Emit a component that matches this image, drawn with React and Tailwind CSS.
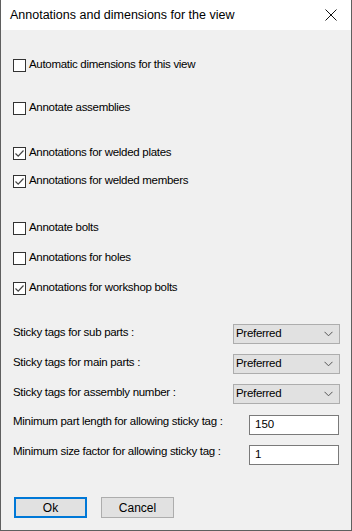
import React, { useState } from 'react';

const font = { fontFamily: '"Segoe UI", "Liberation Sans", Arial, sans-serif' };

function CheckRow({ label, checked, onToggle, className }) {
  return (
    <div className={`flex h-4 items-center pl-3 ${className}`} onClick={onToggle}>
      <div className="flex h-[13px] w-[13px] shrink-0 items-center justify-center border border-[#333333] bg-white">
        {checked && (
          <svg width="11" height="11" viewBox="0 0 11 11">
            <path d="M1.5 5.5 L4.2 8.2 L9.5 2.5" fill="none" stroke="#444444" strokeWidth="1.2" />
          </svg>
        )}
      </div>
      <span className="ml-[3px] text-[11.5px] tracking-[-0.3px] text-black">{label}</span>
    </div>
  );
}

function ComboRow({ label, value, className }) {
  return (
    <div className={`flex h-5 items-center justify-between pl-3 pr-[11px] ${className}`}>
      <span className="-mt-[3px] text-[11.5px] tracking-[-0.3px] text-black">{label}</span>
      <div className="flex h-5 w-[107px] items-center justify-between border border-[#adadad] bg-[#e1e1e1] pl-[2px] pr-[6px]">
        <span className="text-[11.5px] tracking-[-0.3px] text-black">{value}</span>
        <svg width="9" height="6" viewBox="0 0 9 6">
          <path d="M0.5 0.8 L4.5 4.8 L8.5 0.8" fill="none" stroke="#555555" strokeWidth="1" />
        </svg>
      </div>
    </div>
  );
}

function InputRow({ label, value, className }) {
  return (
    <div className={`flex h-5 items-center justify-between pl-3 pr-3 ${className}`}>
      <span className="-mt-[6px] text-[11.5px] tracking-[-0.3px] text-black">{label}</span>
      <div className="flex h-5 w-[90px] items-center border border-[#7a7a7a] bg-white pl-[5px]">
        <span className="text-[11.5px] text-black">{value}</span>
      </div>
    </div>
  );
}

export default function App() {
  const [checks, setChecks] = useState({
    auto: false,
    assemblies: false,
    plates: true,
    members: true,
    bolts: false,
    holes: false,
    workshop: true,
  });

  const toggle = (key) => setChecks({ ...checks, [key]: !checks[key] });

  return (
    <div className="flex h-[531px] w-[352px] flex-col border-x border-b border-[#5f5f5f] bg-[#f0f0f0]" style={font}>
      <div className="flex h-[30px] shrink-0 items-center justify-between bg-white pl-[9px] pr-[14px]">
        <span className="text-[12.5px] text-black">Annotations and dimensions for the view</span>
        <svg width="12" height="12" viewBox="0 0 12 12">
          <path d="M0.5 0.5 L11.5 11.5 M11.5 0.5 L0.5 11.5" stroke="#111111" strokeWidth="1" />
        </svg>
      </div>

      <CheckRow className="mt-[27px]" label="Automatic dimensions for this view" checked={checks.auto} onToggle={() => toggle('auto')} />
      <CheckRow className="mt-[27px]" label="Annotate assemblies" checked={checks.assemblies} onToggle={() => toggle('assemblies')} />
      <CheckRow className="mt-[29px]" label="Annotations for welded plates" checked={checks.plates} onToggle={() => toggle('plates')} />
      <CheckRow className="mt-[12px]" label="Annotations for welded members" checked={checks.members} onToggle={() => toggle('members')} />
      <CheckRow className="mt-[31px]" label="Annotate bolts" checked={checks.bolts} onToggle={() => toggle('bolts')} />
      <CheckRow className="mt-[14px]" label="Annotations for holes" checked={checks.holes} onToggle={() => toggle('holes')} />
      <CheckRow className="mt-[14px]" label="Annotations for workshop bolts" checked={checks.workshop} onToggle={() => toggle('workshop')} />

      <ComboRow className="mt-[28px]" label="Sticky tags for sub parts :" value="Preferred" />
      <ComboRow className="mt-[10px]" label="Sticky tags for main parts :" value="Preferred" />
      <ComboRow className="mt-[10px]" label="Sticky tags for assembly number :" value="Preferred" />

      <InputRow className="mt-[11px]" label="Minimum part length for allowing sticky tag :" value="150" />
      <InputRow className="mt-[10px]" label="Minimum size factor for allowing sticky tag :" value="1" />

      <div className="mt-[32px] flex gap-[14px] pl-[13px]">
        <button className="h-[21px] w-[73px] border-2 border-[#0078d7] bg-[#e1e1e1] text-[12px] text-black">Ok</button>
        <button className="h-[21px] w-[73px] border border-[#adadad] bg-[#e1e1e1] text-[12px] text-black">Cancel</button>
      </div>
    </div>
  );
}
